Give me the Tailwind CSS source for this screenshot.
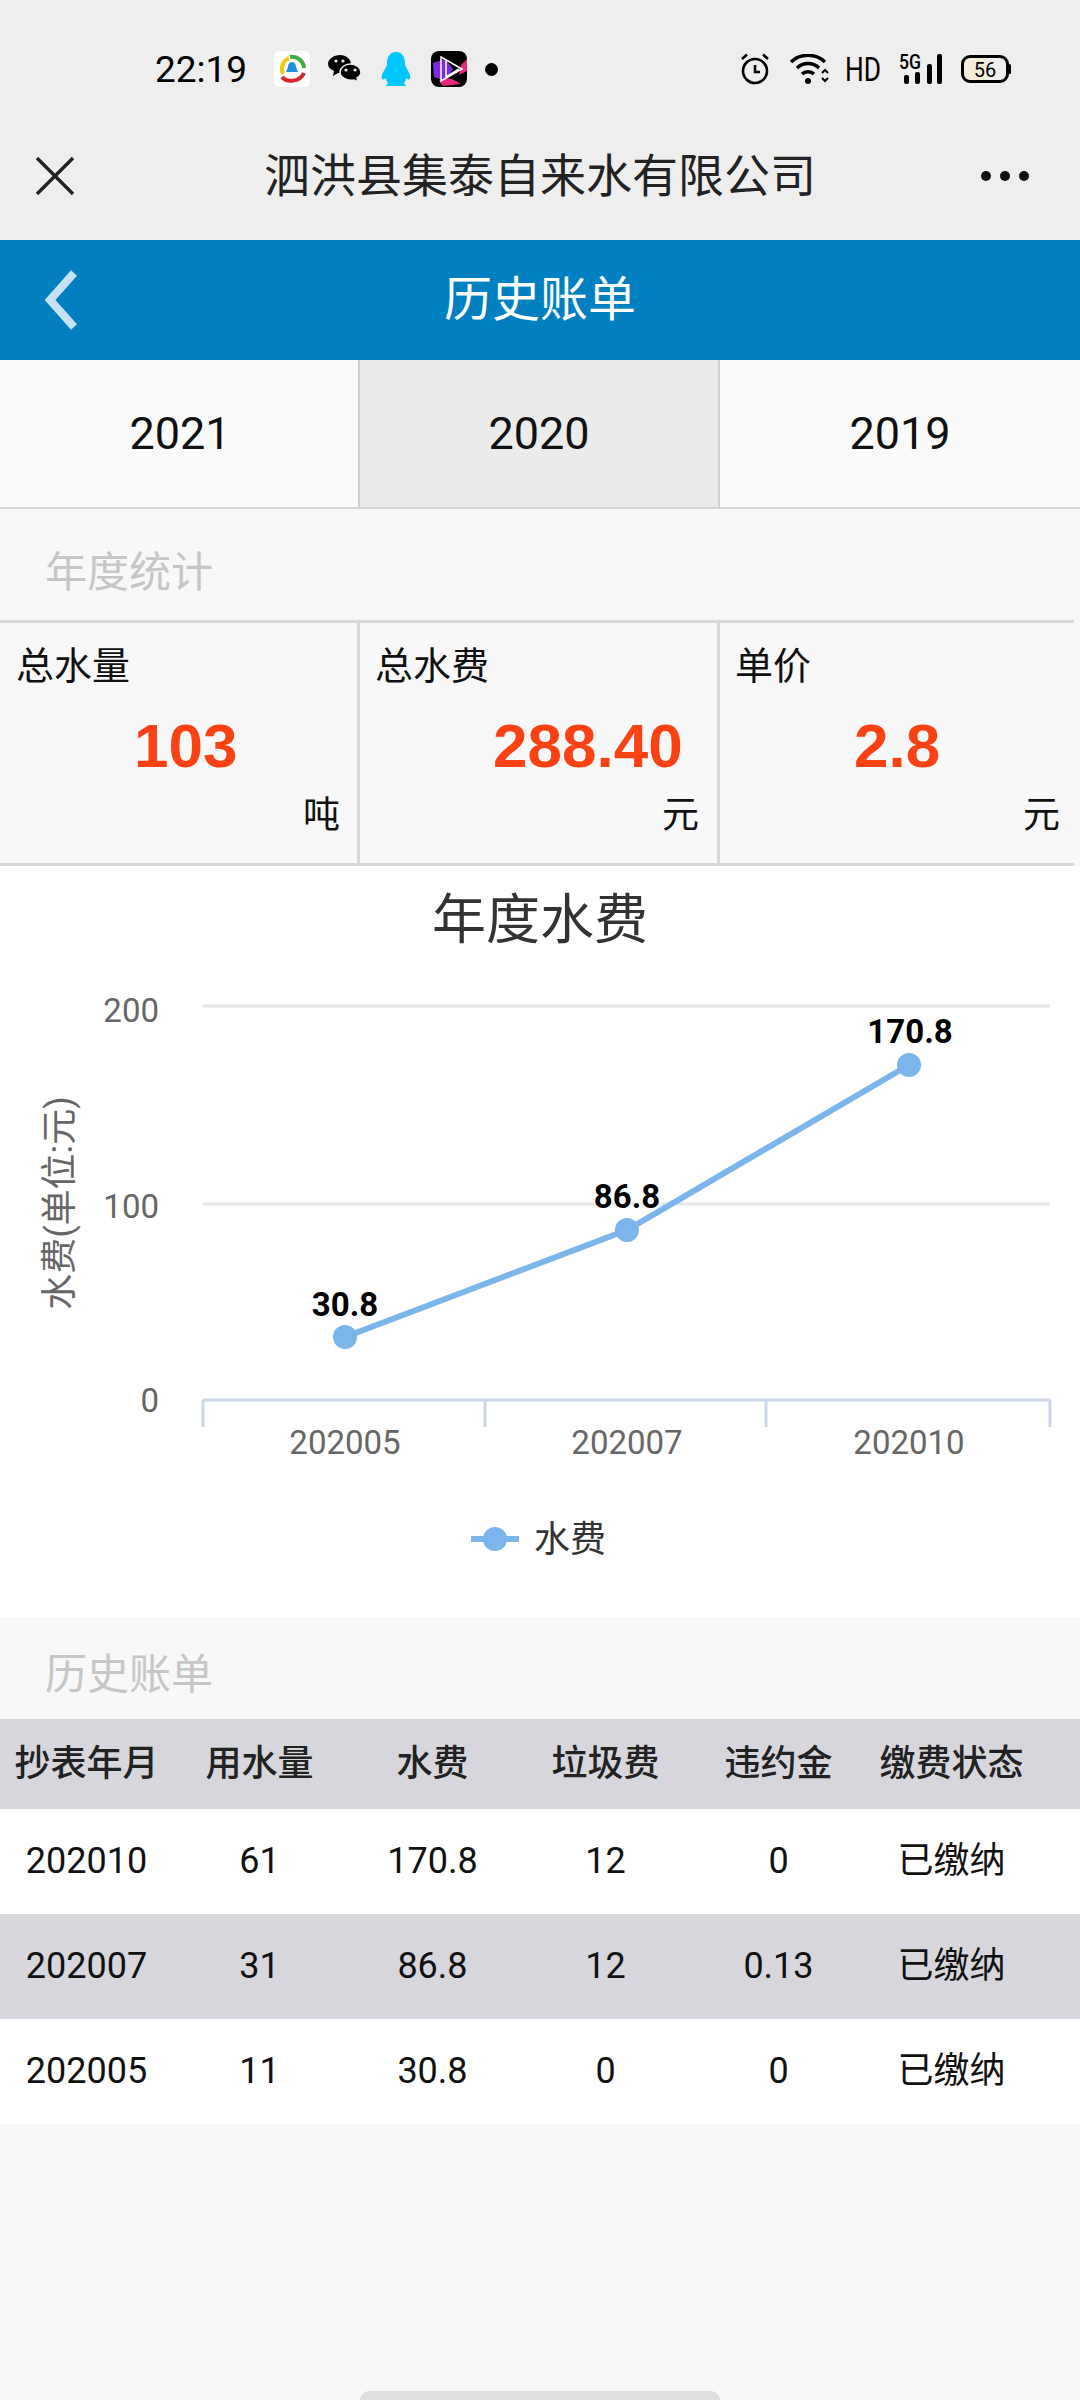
<!DOCTYPE html>
<html lang="zh">
<head>
    <meta charset="UTF-8">
    <meta name="viewport" content="width=device-width, initial-scale=1.0">
    <title>历史账单</title>
    <script src="https://cdn.jsdelivr.net/npm/@tailwindcss/browser@4"></script>
</head>
<body class="relative w-[1080px] h-[2400px] overflow-hidden bg-[#f8f8f8] font-[Roboto,'Noto_Sans_CJK_SC',sans-serif] text-[#111]">

<!-- status bar -->
<div class="flex items-center h-[112px] pt-[26px] pl-[155px] pr-[69px] bg-[#eeeeee] text-black">
    <span class="w-[119px] text-[37px] leading-none">22:19</span>
    <svg class="w-[36px] h-[36px]" viewBox="0 0 36 36">
        <rect width="36" height="36" rx="5" fill="#fff"/>
        <path d="M9 23 A12 12 0 0 1 15 7" fill="none" stroke="#f2c811" stroke-width="4"/>
        <path d="M16 6 A12 12 0 0 1 30 17" fill="none" stroke="#3fae3a" stroke-width="4"/>
        <path d="M30 22 C26 31 13 32 8 26" fill="none" stroke="#d8262c" stroke-width="4"/>
        <path d="M18 11 c3 0 4 3 4 5 l2 5 h-12 l2 -5 c0 -2 1 -5 4 -5z" fill="#2090dc"/>
    </svg>
    <svg class="w-[33px] h-[28px] ml-[18px]" viewBox="0 0 33 28">
        <path d="M12 0 C18 0 23 4 23 9 C23 14 18 18 12 18 L10 18 L5 21 L6 16 C2 14 0 12 0 9 C0 4 6 0 12 0z" fill="#000"/>
        <path d="M22 9 C28 9 33 13 33 17 C33 20 31 22 29 23 L30 27 L26 25 C20 26 12 23 12 17 C12 13 17 9 22 9z" fill="#000" stroke="#eee" stroke-width="1.5"/>
        <circle cx="8" cy="6" r="1.6" fill="#eee"/><circle cx="15" cy="6" r="1.6" fill="#eee"/>
        <circle cx="18" cy="15" r="1.6" fill="#eee"/><circle cx="27" cy="15" r="1.6" fill="#eee"/>
    </svg>
    <svg class="w-[30px] h-[34px] ml-[20px]" viewBox="0 0 30 34">
        <path d="M15 0 C22 0 24 6 24 12 C24 14 25 15 26 17 C28 20 30 24 29 27 C28 28 26 27 25 26 C25 28 24 30 23 31 L25 34 H5 L7 31 C6 30 5 28 5 26 C4 27 2 28 1 27 C0 24 2 20 4 17 C5 15 6 14 6 12 C6 6 8 0 15 0z" fill="#00c6ff"/>
    </svg>
    <svg class="w-[36px] h-[36px] ml-[20px]" viewBox="0 0 36 36">
        <rect width="36" height="36" rx="8" fill="#000"/>
        <path d="M2 12 L14 8 L22 18 L14 30 L3 26z" fill="#7a2be0"/>
        <path d="M8 30 C14 25 22 27 30 33 L12 35z" fill="#e8287c"/>
        <path d="M30 14 L36 8 V20 L28 24z" fill="#e8287c"/>
        <path d="M10 6 L31 18 L10 30z M10 6 V30 M15 10 V26 L28 18" fill="none" stroke="#fff" stroke-width="1.5"/>
    </svg>
    <span class="w-[13px] h-[13px] ml-[18px] rounded-full bg-black"></span>

    <svg class="ml-auto w-[30px] h-[32px]" viewBox="0 0 30 32">
        <circle cx="15" cy="18" r="12" fill="none" stroke="#000" stroke-width="2.6"/>
        <path d="M15 12 V19 H20" fill="none" stroke="#000" stroke-width="2.6"/>
        <path d="M2 6 L7 1.5 M28 6 L23 1.5" stroke="#000" stroke-width="2.6"/>
    </svg>
    <svg class="w-[40px] h-[30px] ml-[20px]" viewBox="0 0 40 30">
        <path d="M1 8 C10 -1 26 -1 35 8" fill="none" stroke="#000" stroke-width="3.4"/>
        <path d="M7 14 C13 8 23 8 29 14" fill="none" stroke="#000" stroke-width="3.4"/>
        <path d="M12 20 C15 17 21 17 24 20" fill="none" stroke="#000" stroke-width="3.4"/>
        <circle cx="18" cy="27" r="3" fill="#000"/>
        <path d="M32 19 L35 16 L38 19 M32 24 L35 27 L38 24" fill="none" stroke="#000" stroke-width="2"/>
    </svg>
    <svg class="w-[36px] h-[26px] ml-[15px] overflow-visible" viewBox="0 0 36 26">
        <text x="0" y="25" textLength="36" lengthAdjust="spacingAndGlyphs" class="text-[33px]">HD</text>
    </svg>
    <svg class="w-[44px] h-[30px] ml-[18px] overflow-visible" viewBox="0 0 44 30">
        <text x="0" y="15" textLength="22" lengthAdjust="spacingAndGlyphs" class="text-[21px] font-medium">5G</text>
        <rect x="5" y="21" width="5" height="9" rx="2"/>
        <rect x="16" y="18" width="5" height="12" rx="2"/>
        <rect x="28" y="10" width="5" height="20" rx="2"/>
        <rect x="38" y="0" width="5" height="30" rx="2"/>
    </svg>
    <svg class="w-[50px] h-[28px] ml-[18px]" viewBox="0 0 50 28">
        <rect x="2" y="2" width="44" height="24" rx="7" fill="#f4edd9"/>
        <path d="M27 2 H39 a7 7 0 0 1 7 7 V19 a7 7 0 0 1 -7 7 H27z" fill="#eee"/>
        <rect x="1.5" y="1.5" width="45" height="25" rx="7.5" fill="none" stroke="#000" stroke-width="3"/>
        <rect x="47" y="9" width="3" height="10" rx="1.5"/>
        <text x="24" y="22" text-anchor="middle" class="text-[20px]">56</text>
    </svg>
</div>

<!-- webview title -->
<div class="grid grid-cols-[1fr_auto_1fr] items-center h-[128px] px-[36px] bg-[#eeeeee]">
    <svg class="w-[38px] h-[38px]" viewBox="0 0 38 38">
        <path d="M1 1 L37 37 M37 1 L1 37" stroke="#222" stroke-width="3.4"/>
    </svg>
    <span class="text-[46px] leading-none text-[#222]">泗洪县集泰自来水有限公司</span>
    <div class="flex justify-end gap-[9px] mr-[15px]">
        <span class="w-[10px] h-[10px] rounded-full bg-[#111]"></span>
        <span class="w-[10px] h-[10px] rounded-full bg-[#111]"></span>
        <span class="w-[10px] h-[10px] rounded-full bg-[#111]"></span>
    </div>
</div>

<!-- page header -->
<header class="relative flex items-center justify-center h-[120px] bg-[#0080c0] text-white">
    <svg class="absolute left-[43px] top-[29px] w-[36px] h-[62px]" viewBox="0 0 36 62">
        <path d="M31 4 L7 31 L31 58" fill="none" stroke="#c5e1f3" stroke-width="8"/>
    </svg>
    <h1 class="text-[48px] leading-none">历史账单</h1>
</header>

<!-- year tabs -->
<div class="grid grid-cols-3 h-[149px] bg-[#fafafa] border-b-2 border-[#d4d4d4] text-[45px]">
    <div class="flex items-center justify-center pl-[2px] border-r-2 border-[#d0d0d0]">2021</div>
    <div class="flex items-center justify-center border-r-2 border-[#d0d0d0] bg-[#ebebeb]">2020</div>
    <div class="flex items-center justify-center">2019</div>
</div>

<!-- yearly stats -->
<div class="flex items-center h-[111px] pl-[45px] pt-[16px] text-[42px] text-[#c6c6c6]">年度统计</div>
<div class="grid grid-cols-[360px_360px_354px] w-[1074px] h-[246px] border-y-[3px] border-[#d8d8dc] bg-[#f8f8f8]">
    <div class="flex flex-col border-r-[3px] border-[#d8d8dc]">
        <span class="pl-[16px] pt-[22px] text-[38px] leading-[42px]">总水量</span>
        <span class="pl-[134px] pt-[26px] font-['Liberation_Sans'] font-bold text-[62px] leading-[66px] text-[#fb4214]">103</span>
        <span class="pr-[17px] pt-[16px] text-right text-[37px] leading-[42px]">吨</span>
    </div>
    <div class="flex flex-col border-r-[3px] border-[#d8d8dc]">
        <span class="pl-[15px] pt-[22px] text-[38px] leading-[42px]">总水费</span>
        <span class="pl-[133px] pt-[26px] font-['Liberation_Sans'] font-bold text-[62px] leading-[66px] text-[#fb4214]">288.40</span>
        <span class="pr-[18px] pt-[16px] text-right text-[37px] leading-[42px]">元</span>
    </div>
    <div class="flex flex-col">
        <span class="pl-[15px] pt-[22px] text-[38px] leading-[42px]">单价</span>
        <span class="pl-[134px] pt-[26px] font-['Liberation_Sans'] font-bold text-[62px] leading-[66px] text-[#fb4214]">2.8</span>
        <span class="pr-[14px] pt-[16px] text-right text-[37px] leading-[42px]">元</span>
    </div>
</div>

<!-- yearly fee line chart, coordinates are in page pixels -->
<svg class="block w-[1080px] h-[751px] bg-white" viewBox="0 866 1080 751">
    <text x="540" y="939" text-anchor="middle" class="text-[54px] fill-[#333]">年度水费</text>

    <path d="M203 1006 H1050 M203 1204 H1050" stroke="#e6e6e6" stroke-width="3"/>
    <path d="M203 1400 H1050 M203 1400 V1427 M485 1400 V1427 M766 1400 V1427 M1050 1400 V1427" fill="none" stroke="#ccd6eb" stroke-width="3"/>

    <g class="text-[33px] fill-[#666]" text-anchor="end">
        <text x="159" y="1022">200</text>
        <text x="159" y="1218">100</text>
        <text x="159" y="1412">0</text>
    </g>
    <g class="text-[33px] fill-[#666]" text-anchor="middle">
        <text x="345" y="1454">202005</text>
        <text x="627" y="1454">202007</text>
        <text x="909" y="1454">202010</text>
    </g>
    <text transform="translate(72 1203) rotate(-90)" text-anchor="middle" class="text-[36px] fill-[#666]">水费(单位:元)</text>

    <path d="M345 1337 L627 1230 L909 1065" fill="none" stroke="#7cb5ec" stroke-width="6"/>
    <circle cx="345" cy="1337" r="12" fill="#7cb5ec"/>
    <circle cx="627" cy="1230" r="12" fill="#7cb5ec"/>
    <circle cx="909" cy="1065" r="12" fill="#7cb5ec"/>

    <g class="text-[33px] font-bold fill-black stroke-white stroke-[2px] [paint-order:stroke]" text-anchor="middle">
        <text x="345" y="1316">30.8</text>
        <text x="627" y="1208">86.8</text>
        <text x="910" y="1043">170.8</text>
    </g>

    <path d="M471 1539 H519" stroke="#7cb5ec" stroke-width="6"/>
    <circle cx="495" cy="1539" r="12" fill="#7cb5ec"/>
    <text x="534" y="1552" class="text-[36px] fill-[#333]">水费</text>
</svg>

<!-- bill history -->
<div class="flex items-center h-[102px] pl-[45px] pt-[12px] text-[42px] text-[#c6c6c6]">历史账单</div>
<div class="text-[36px]">
    <div class="grid grid-cols-[repeat(6,173px)] items-center h-[90px] bg-[#d6d6dc] text-center font-medium text-[#222]">
        <span>抄表年月</span><span>用水量</span><span>水费</span><span>垃圾费</span><span>违约金</span><span>缴费状态</span>
    </div>
    <div class="grid grid-cols-[repeat(6,173px)] items-center h-[105px] pb-[2px] bg-white text-center">
        <span>202010</span><span>61</span><span>170.8</span><span>12</span><span>0</span><span>已缴纳</span>
    </div>
    <div class="grid grid-cols-[repeat(6,173px)] items-center h-[105px] pb-[2px] bg-[#d6d6dc] text-center">
        <span>202007</span><span>31</span><span>86.8</span><span>12</span><span>0.13</span><span>已缴纳</span>
    </div>
    <div class="grid grid-cols-[repeat(6,173px)] items-center h-[105px] pb-[2px] bg-white text-center">
        <span>202005</span><span>11</span><span>30.8</span><span>0</span><span>0</span><span>已缴纳</span>
    </div>
</div>

<!-- gesture bar -->
<div class="absolute left-[360px] bottom-0 w-[360px] h-[9px] rounded-t-full bg-[#e0e0e0]"></div>
</body>
</html>
